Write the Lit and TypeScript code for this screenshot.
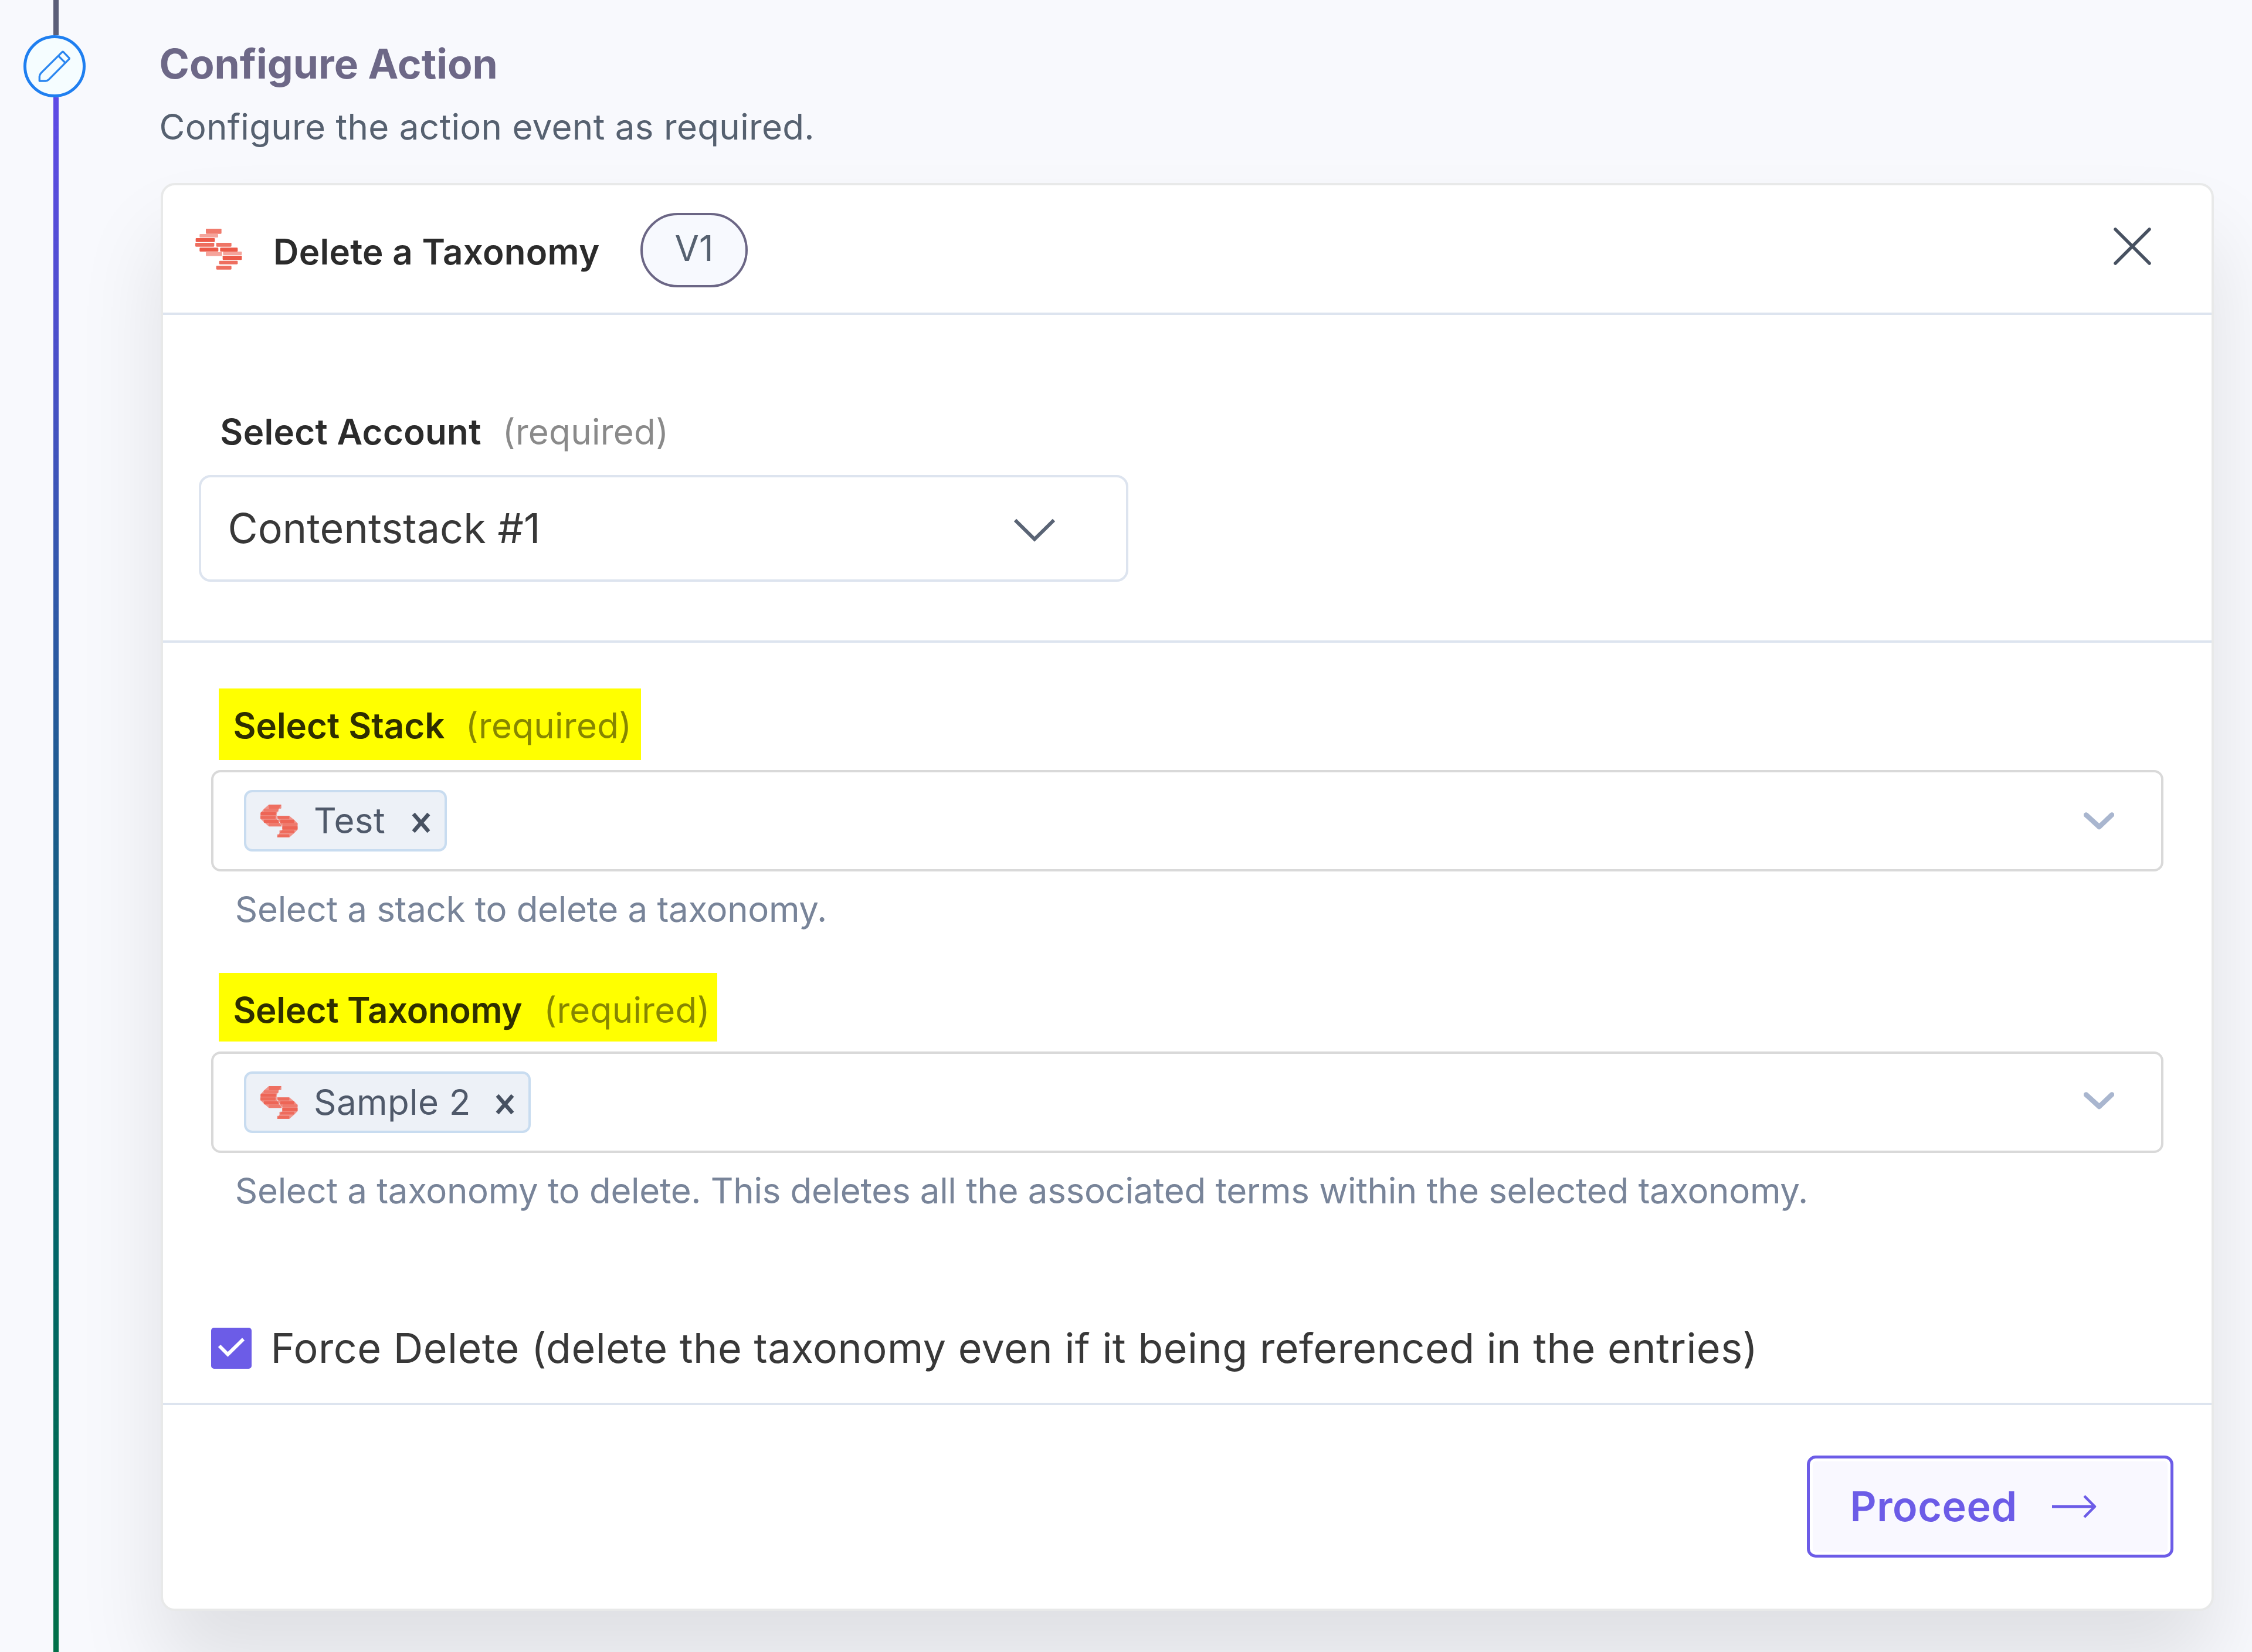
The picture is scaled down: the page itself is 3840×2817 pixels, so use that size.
import { LitElement, html, css, svg, nothing } from "lit";
import { customElement, property } from "lit/decorators.js";
import { classMap } from "lit/directives/class-map.js";

/** Striped brand mark: [x, y, width, height, opacity] per bar on a 240 x 210 grid. */
const STRIPES: number[][] = [
  [54, 0, 80, 26, 0.8],
  [22, 27, 95, 18, 0.55],
  [2, 48, 98, 20, 1],
  [0, 72, 97, 20, 0.88],
  [107, 72, 78, 20, 0.84],
  [22, 97, 96, 20, 1],
  [127, 97, 90, 20, 1],
  [54, 119, 83, 21, 0.55],
  [142, 117, 96, 18, 0.55],
  [140, 138, 98, 22, 1],
  [122, 164, 95, 18, 0.88],
  [107, 190, 78, 19, 0.88],
];

@customElement("brand-mark")
export class BrandMark extends LitElement {
  @property({ type: Boolean }) solid = false;

  static styles = css`
    :host {
      display: block;
      flex: none;
    }
    .mark {
      display: block;
      width: 100%;
      height: 100%;
    }
    .bar {
      fill: #ec5a49;
    }
    .under {
      fill: #f0938a;
    }
  `;

  render() {
    return html`<svg class="mark" viewBox="0 0 240 210" preserveAspectRatio="none">
      ${this.solid
        ? svg`<path class="under" d="M54 0H134L117 28L104 60L104 90L118 112L137 140H54L22 112L0 90V55L22 28ZM107 72H185L217 98L238 120V160L217 182L185 210H107L122 182L140 160V135L122 112Z"/>`
        : nothing}
      ${STRIPES.map(
        ([x, y, w, h, o]) =>
          svg`<rect class="bar" x=${x} y=${y} width=${w} height=${h} rx="4" opacity=${this.solid ? o * 0.8 : o}/>`
      )}
    </svg>`;
  }
}

@customElement("tag-field")
export class TagField extends LitElement {
  @property() label = "";
  @property() value = "";
  @property() help = "";
  @property() kind: "stack" | "taxonomy" = "stack";

  static styles = css`
    :host {
      display: block;
    }
    .label {
      display: flex;
      box-sizing: border-box;
      width: 720px;
      height: 122px;
      margin-left: 13px;
      padding: 26px 0 0 24.4px;
      gap: 35.4px;
      background: #ffff00;
      line-height: 74px;
      font-size: 60px;
      white-space: nowrap;
    }
    .taxonomy .label {
      width: 849.6px;
      height: 117px;
      padding-top: 25.5px;
      gap: 37px;
    }
    .name {
      font-weight: 600;
      color: #2e2e00;
    }
    .taxonomy .name {
      letter-spacing: -0.32px;
    }
    .required {
      color: #868600;
      letter-spacing: 0.33px;
    }
    .box {
      display: flex;
      align-items: center;
      justify-content: space-between;
      box-sizing: border-box;
      height: 173px;
      margin-top: 17px;
      padding: 0 80px 0 52px;
      border: 4px solid #d9d9d9;
      border-radius: 16px;
      background: #fff;
    }
    .tag {
      display: flex;
      align-items: center;
      box-sizing: border-box;
      width: 346px;
      height: 105px;
      padding: 0 23px 0 24px;
      border: 4px solid #c8dcf0;
      border-radius: 14px;
      background: #edf1f7;
    }
    .taxonomy .tag {
      width: 489px;
    }
    .logo {
      width: 64px;
      height: 56px;
      margin-right: 27px;
      margin-top: 1px;
    }
    .text {
      margin-top: -2px;
      line-height: 74px;
      font-size: 60px;
      letter-spacing: 0.4px;
      color: #4f596a;
      white-space: nowrap;
    }
    .remove {
      width: 34px;
      height: 36px;
      margin-left: auto;
      margin-top: 7px;
    }
    .chevron {
      width: 52px;
      height: 32px;
      margin-top: 3px;
    }
    .taxonomy .chevron {
      margin-top: -4px;
    }
    .help {
      margin: 26.5px 0 0 40.8px;
      line-height: 74px;
      font-size: 60px;
      letter-spacing: -0.32px;
      color: #788499;
      white-space: nowrap;
    }
  `;

  render() {
    return html`<div class=${classMap({ taxonomy: this.kind === "taxonomy" })}>
      <div class="label">
        <span class="name">${this.label}</span><span class="required">(required)</span>
      </div>
      <div class="box">
        <div class="tag">
          <brand-mark class="logo" solid></brand-mark>
          <span class="text">${this.value}</span>
          <svg class="remove" viewBox="0 0 34 36">
            <path d="M4 3L30 33M30 3L4 33" fill="none" stroke="#475161" stroke-width="6.5" />
          </svg>
        </div>
        <svg class="chevron" viewBox="0 0 52 32">
          <path d="M4 4.5L26.5 25L48 4.5" fill="none" stroke="#a9b6cf" stroke-width="8.5" stroke-linecap="round" stroke-linejoin="round" />
        </svg>
      </div>
      <div class="help">${this.help}</div>
    </div>`;
  }
}

@customElement("app-root")
export class AppRoot extends LitElement {
  static styles = css`
    :host {
      display: block;
      font-family: Inter, "Liberation Sans", sans-serif;
    }
    .page {
      display: flex;
      width: 3840px;
      height: 2817px;
      overflow: hidden;
      background: #f8f9fd;
    }
    .rail {
      display: flex;
      flex-direction: column;
      flex: none;
      width: 106px;
      margin-left: 40px;
      z-index: 1;
    }
    .line {
      width: 9px;
      margin-left: 51px;
    }
    .before {
      height: 60px;
      background: #5c5f78;
    }
    .after {
      flex: 1;
      background: linear-gradient(
        #5f4be6 0%,
        #4a50c9 17%,
        #3458ae 30%,
        #205b93 43%,
        #0f6079 57%,
        #026668 74%,
        #006b52 90%,
        #007048 100%
      );
    }
    .step {
      display: flex;
      align-items: center;
      justify-content: center;
      box-sizing: border-box;
      width: 106px;
      height: 106px;
      border: 5px solid #1f7ff0;
      border-radius: 50%;
      background: #f5fdff;
    }
    .pencil {
      width: 58px;
      height: 58px;
    }
    .content {
      display: flex;
      flex-direction: column;
      flex: none;
      width: 3501px;
      margin-left: 128px;
      padding-top: 66px;
    }
    .title {
      margin: 0;
      line-height: 86px;
      font-size: 69.5px;
      font-weight: 700;
      color: #6d6887;
      margin-left: -2.5px;
    }
    .subtitle {
      margin: 26.5px 0 0 -2.5px;
      line-height: 74px;
      font-size: 60px;
      letter-spacing: 0.33px;
      color: #566170;
    }
    .card {
      display: flex;
      flex-direction: column;
      box-sizing: border-box;
      height: 2435px;
      margin-top: 59.5px;
      border: 4px solid #e8e9e9;
      border-radius: 24px;
      background: #fff;
      box-shadow: 0 95px 145px rgba(0, 0, 0, 0.1);
    }
    .head {
      display: flex;
      align-items: flex-start;
      box-sizing: border-box;
      height: 221px;
      padding-left: 55px;
      border-bottom: 4px solid #dde4ef;
    }
    .logo {
      width: 80px;
      height: 70px;
      margin-top: 74px;
    }
    .name {
      margin: 75.5px 0 0 53px;
      line-height: 74px;
      font-size: 60px;
      font-weight: 600;
      letter-spacing: 0.3px;
      color: #2b2b2b;
      white-space: nowrap;
    }
    .badge {
      box-sizing: border-box;
      width: 183px;
      height: 127px;
      margin: 47px 0 0 69.4px;
      border: 4.5px solid #6b6685;
      border-radius: 64px;
      background: #f7f9fe;
      text-align: center;
      line-height: 113px;
      font-size: 60px;
      color: #566170;
    }
    .close {
      width: 66px;
      height: 66px;
      margin: 71px 102px 0 auto;
    }
    .account {
      box-sizing: border-box;
      height: 559px;
      padding: 162px 0 0 61px;
      border-bottom: 4px solid #dde4ef;
    }
    .account-label {
      display: flex;
      gap: 36px;
      margin-left: 36.3px;
      line-height: 74px;
      font-size: 60px;
      letter-spacing: 0.33px;
      color: #8a8a8a;
    }
    .strong {
      font-weight: 600;
      color: #2b2b2b;
    }
    .select {
      display: flex;
      align-items: center;
      justify-content: space-between;
      box-sizing: border-box;
      width: 1585px;
      height: 182px;
      margin-top: 37px;
      padding: 0 121px 0 45.5px;
      border: 4px solid #dde4ef;
      border-radius: 20px;
      line-height: 86px;
      font-size: 70px;
      letter-spacing: 0.1px;
      color: #383838;
    }
    .caret {
      width: 70px;
      height: 40px;
      margin-top: 5px;
    }
    .config {
      box-sizing: border-box;
      height: 1300px;
      padding: 78px 82.5px 0 82px;
      border-bottom: 4px solid #dde4ef;
    }
    .second {
      margin-top: 72.5px;
    }
    .check-row {
      display: flex;
      align-items: center;
      gap: 32.5px;
      margin-top: 189.5px;
      line-height: 86px;
      font-size: 70px;
      letter-spacing: 0.49px;
      color: #383838;
      white-space: nowrap;
    }
    .checkbox {
      width: 69px;
      height: 70px;
      border-radius: 5px;
      background: #6c5ce7;
    }
    .foot {
      display: flex;
      justify-content: flex-end;
      padding: 86px 65px 0 0;
    }
    .proceed {
      display: flex;
      align-items: center;
      box-sizing: border-box;
      width: 625px;
      height: 174px;
      margin: 0;
      padding: 0 0 0 68.5px;
      gap: 58px;
      border: 5px solid #6c5ce7;
      border-radius: 15px;
      background: #f9f8ff;
      box-shadow: inset 0 0 0 5px #fff;
      font: 600 70px/86px Inter, "Liberation Sans", sans-serif;
      letter-spacing: 0.58px;
      color: #6c5ce7;
    }
    .arrow {
      width: 78px;
      height: 40px;
    }
  `;

  render() {
    return html`<div class="page">
      <div class="rail">
        <div class="line before"></div>
        <div class="step">
          <svg class="pencil" viewBox="0 0 175 175" fill="none" stroke="#2a86f0" stroke-width="10" stroke-linejoin="round">
            <path d="M10 163V141Q11 129 19 121L127 14Q130 11 133 14L162 44Q165 48 162 51L58 156Q51 163 42 163Z" />
            <path d="M106 33L143 70" />
          </svg>
        </div>
        <div class="line after"></div>
      </div>
      <main class="content">
        <h1 class="title">Configure Action</h1>
        <div class="subtitle">Configure the action event as required.</div>
        <section class="card">
          <div class="head">
            <brand-mark class="logo"></brand-mark>
            <div class="name">Delete a Taxonomy</div>
            <div class="badge">V1</div>
            <svg class="close" viewBox="0 0 66 66">
              <path d="M4 4L62 62M62 4L4 62" fill="none" stroke="#475161" stroke-width="5.5" stroke-linecap="round" />
            </svg>
          </div>
          <div class="account">
            <div class="account-label"><span class="strong">Select Account</span><span>(required)</span></div>
            <div class="select">
              <span>Contentstack #1</span>
              <svg class="caret" viewBox="0 0 70 40">
                <path d="M2 3L35 35.5L68 3" fill="none" stroke="#5a6475" stroke-width="6" />
              </svg>
            </div>
          </div>
          <div class="config">
            <tag-field kind="stack" label="Select Stack" value="Test" help="Select a stack to delete a taxonomy."></tag-field>
            <tag-field
              class="second"
              kind="taxonomy"
              label="Select Taxonomy"
              value="Sample 2"
              help="Select a taxonomy to delete. This deletes all the associated terms within the selected taxonomy."
            ></tag-field>
            <div class="check-row">
              <svg class="checkbox" viewBox="0 0 69 70">
                <path d="M14 31L28.5 45.5L55 19.5" fill="none" stroke="#fff" stroke-width="6" />
              </svg>
              <span>Force Delete (delete the taxonomy even if it being referenced in the entries)</span>
            </div>
          </div>
          <div class="foot">
            <button class="proceed">
              Proceed
              <svg class="arrow" viewBox="0 0 78 40" fill="none" stroke="#6c5ce7">
                <path d="M1 20H72" stroke-width="5" />
                <path d="M56 2L74 20L56 38" stroke-width="4.5" stroke-linejoin="round" />
              </svg>
            </button>
          </div>
        </section>
      </main>
    </div>`;
  }
}
